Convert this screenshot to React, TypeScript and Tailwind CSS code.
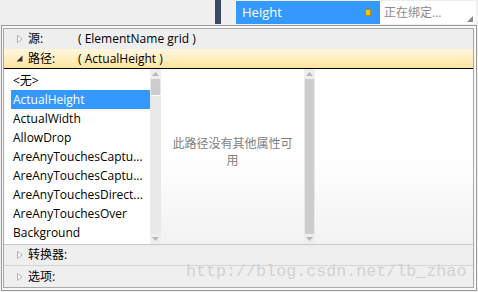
import React from "react";

const items = [
  "<无>",
  "ActualHeight",
  "ActualWidth",
  "AllowDrop",
  "AreAnyTouchesCaptu...",
  "AreAnyTouchesCaptu...",
  "AreAnyTouchesDirect...",
  "AreAnyTouchesOver",
  "Background",
];

const font = { fontFamily: '"Segoe UI", "Open Sans", "Noto Sans CJK SC", sans-serif' };

function HollowTri() {
  return (
    <svg width="6" height="8" viewBox="0 0 6 8" className="shrink-0">
      <path d="M0.5 0.5 L5 4 L0.5 7.5 Z" fill="#ffffff" stroke="#b0b0b0" strokeWidth="1" />
    </svg>
  );
}

function FilledTri() {
  return (
    <svg width="7" height="7" viewBox="0 0 7 7" className="shrink-0">
      <path d="M6.5 0.5 L6.5 6.5 L0.5 6.5 Z" fill="#333333" />
    </svg>
  );
}

function ScrollBar({ full }: { full?: boolean }) {
  return (
    <div className="w-[11px] flex flex-col bg-[#e8e8e8] shrink-0">
      <div className="h-[10px] flex items-center justify-center bg-[#eeeeee]">
        <svg width="7" height="4" viewBox="0 0 7 4">
          <path d="M3.5 0 L7 4 L0 4 Z" fill="#b8b8b8" />
        </svg>
      </div>
      {full ? (
        <div className="flex-1 mx-[1px] bg-[#cdcdcd]" />
      ) : (
        <>
          <div className="h-[16px] mx-[1px] bg-[#cdcdcd]" />
          <div className="h-[1px] bg-white" />
          <div className="flex-1" />
        </>
      )}
      <div className="h-[10px] flex items-center justify-center bg-[#eeeeee]">
        <svg width="7" height="4" viewBox="0 0 7 4">
          <path d="M0 0 L7 0 L3.5 4 Z" fill="#b8b8b8" />
        </svg>
      </div>
    </div>
  );
}

export default function App() {
  return (
    <div
      className="w-[478px] h-[292px] bg-[#f0f0f0] relative overflow-hidden text-[12px] text-black"
      style={font}
    >
      {/* top bar */}
      <div className="h-[25px] flex">
        <div className="w-[215px]" />
        <div className="w-[6px] h-[24px] bg-[#3b4866]" />
        <div className="w-[15px]" />
        <div className="w-[144px] h-[23px] mt-[1px] bg-[#3399ff] flex items-center pl-[6px] pr-[9px]">
          <span className="text-white text-[13px] flex-1">Height</span>
          <div className="w-[6px] h-[7px] bg-[#f5c800] border border-[#b08a00]" />
        </div>
        <div className="w-[96px] h-[23px] mt-[1px] bg-white relative flex items-center pl-[4px]">
          <span className="text-[#8a8a8a] text-[12px]">正在绑定...</span>
          <svg width="6" height="6" viewBox="0 0 6 6" className="absolute right-[3px] bottom-[2px]">
            <path d="M6 0 L6 6 L0 6 Z" fill="#8a8a8a" />
          </svg>
        </div>
      </div>

      {/* popup */}
      <div className="ml-[1px] w-[476px] h-[266px] border border-[#9a9a9a] bg-[#f8f8f8] pl-[1px] pt-[2px] pr-[2px] pb-[2px] flex">
        <div className="flex-1 border border-[#a8a8a8] flex flex-col bg-white">
          <div className="h-[20px] bg-[#eeeeee] flex items-center pl-[13px] shrink-0">
            <HollowTri />
            <span className="ml-[5px] w-[50px]">源:</span>
            <span>( ElementName grid )</span>
          </div>
          <div className="h-[20px] bg-gradient-to-b from-[#fff7df] to-[#ffe49c] flex items-center pl-[12px] border-b border-black shrink-0">
            <FilledTri />
            <span className="ml-[5px] w-[50px]">路径:</span>
            <span>( ActualHeight )</span>
          </div>
          <div className="h-[176px] flex border-b border-[#c8c8c8] shrink-0">
            <div className="w-[146px] bg-white pt-[2px] pl-[7px]">
              {items.map((t, i) => (
                <div
                  key={i}
                  className={
                    "h-[19px] flex items-center pl-[2px] whitespace-nowrap overflow-hidden " +
                    (i === 1 ? "bg-[#3399ff] text-white" : "")
                  }
                >
                  {t}
                </div>
              ))}
            </div>
            <ScrollBar />
            <div className="w-[143px] bg-gradient-to-b from-white from-50% to-[#f2f2f2] flex items-center justify-center">
              <div className="text-[#808080] text-center leading-[17px] w-[130px] mt-[-10px]">
                此路径没有其他属性可用
              </div>
            </div>
            <ScrollBar full />
            <div className="flex-1 bg-gradient-to-b from-white from-50% to-[#f2f2f2]" />
          </div>
          <div className="h-[21px] bg-[#efefef] flex items-center pl-[13px] border-b border-[#d4d4d4] shrink-0">
            <HollowTri />
            <span className="ml-[5px]">转换器:</span>
          </div>
          <div className="flex-1 bg-[#efefef] flex items-center pl-[13px]">
            <HollowTri />
            <span className="ml-[5px]">选项:</span>
          </div>
        </div>
      </div>

      <div
        className="absolute left-[186px] top-[259px] text-[#d2d2d2] text-[16.7px] whitespace-nowrap"
        style={{ fontFamily: '"Liberation Mono", monospace' }}
      >
        http://blog.csdn.net/lb_zhao
      </div>
    </div>
  );
}
